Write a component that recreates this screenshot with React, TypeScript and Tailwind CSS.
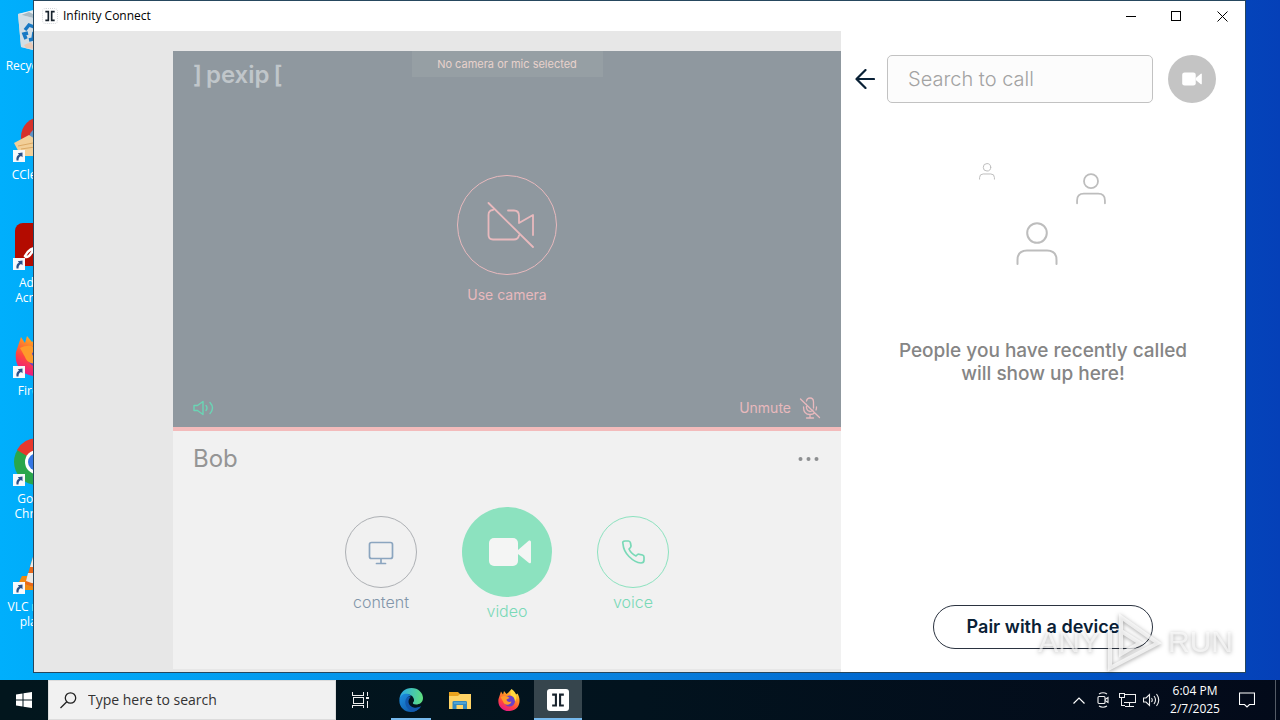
import type { ReactNode } from 'react';

function ShortcutArrow() {
  return (
    <svg viewBox="0 0 12 12" className="absolute bottom-0 left-0 size-3" aria-hidden="true">
      <rect width="12" height="12" fill="#f6f9fc" />
      <path d="M3.500 10.500C3 7.500 4 5.500 6 4.800L4.800 3.200 9.500 2.500 9.500 7.200 8 6C6 6.800 5.500 8.500 5.500 10.500Z" fill="#2c5188" />
    </svg>
  );
}

function RecycleBin() {
  return (
    <svg viewBox="0 0 48 48" className="size-12" aria-hidden="true">
      <path d="M5 9 24 5 43 9 38 42 24 46 8 42Z" fill="#c3d3dd" />
      <path d="M5 9 24 14 43 9 24 4Z" fill="#e6edf1" />
      <path d="M8 10 16 7 22 10 30 6 38 10 24 14Z" fill="#a9bac4" />
      <path d="M5 9 24 14 24 46 8 42Z" fill="#d3dee5" />
      <path d="M12 25 16 20 21 22M21 27 20 34 16 35M13 34 11 29 15 28" fill="none" stroke="#1879c4" strokeWidth="3.500" />
      <path d="M11 40 18 37 22 44 13 43Z" fill="#e9c9b6" />
    </svg>
  );
}

function CCleaner() {
  return (
    <svg viewBox="0 0 48 48" className="size-12" aria-hidden="true">
      <circle cx="28" cy="23" r="20" fill="#d6322b" />
      <circle cx="28" cy="25" r="12" fill="#5f93c6" />
      <path d="M1 29 16 21 25 27 25 42 8 42Z" fill="#f2cf98" />
      <path d="M5 32 20 29M8 35 22 33" stroke="#dba965" />
    </svg>
  );
}

function Acrobat() {
  return (
    <svg viewBox="0 0 48 48" className="size-12" aria-hidden="true">
      <rect x="2" y="1" width="44" height="43" rx="8" fill="#b30b00" />
      <path d="M12 34C16 26 23 24 33 26 42 28 37 34 29 27 20 20 21 9 24 12 27 16 18 36 13 35Z" fill="none" stroke="#fff" strokeWidth="2.500" />
    </svg>
  );
}

function Firefox({ className }: { className: string }) {
  return (
    <svg viewBox="0 0 48 48" className={className} aria-hidden="true">
      <defs>
        <linearGradient id="fox" x1="0.8" y1="0" x2="0.3" y2="1">
          <stop offset="0" stopColor="#fff04a" />
          <stop offset="0.350" stopColor="#ff9a24" />
          <stop offset="0.700" stopColor="#ff4440" />
          <stop offset="1" stopColor="#e8178a" />
        </linearGradient>
      </defs>
      <path d="M29 2C35 6 37 10 38 13L41 11C49 24 46 44 26 46 9 47 1 35 3 22L6 13 8 7 12 13 14 6 19 12C22 10 25 7 29 2Z" fill="url(#fox)" />
      <circle cx="25" cy="26" r="11" fill="#6a40c8" />
      <path d="M7 18C15 14 22 16 25 20L19 23C19 27 24 29 29 27 27 35 15 36 12 27Z" fill="#ff9a2a" />
      <path d="M28 4C38 9 42 19 36 27 36 20 32 16 27 14Z" fill="#ffd83d" />
    </svg>
  );
}

function Chrome() {
  return (
    <svg viewBox="0 0 48 48" className="size-12" aria-hidden="true">
      <circle cx="24" cy="24" r="23" fill="#29a64b" />
      <path d="M24 24 4 12A23 23 0 0 1 44 12Z" fill="#e8382c" />
      <path d="M24 24 44 12A23 23 0 0 1 24 47Z" fill="#fbc116" />
      <circle cx="24" cy="24" r="12" fill="#fff" />
      <circle cx="24" cy="24" r="9" fill="#3577e5" />
    </svg>
  );
}

function Vlc() {
  return (
    <svg viewBox="0 0 48 48" className="size-12" aria-hidden="true">
      <path d="M9 30H39L46 44H2Z" fill="#f08a12" />
      <path d="M22 4H26L36 38Q24 44 12 38Z" fill="#e9691a" />
      <path d="M20 11H28L31 21H17ZM15 27H33L35 35Q24 40 13 35Z" fill="#ece9e5" />
    </svg>
  );
}

const shortcuts: { lines: string[]; icon: ReactNode; place: string; linked: boolean }[] = [
  { lines: ['Recycle Bin'], icon: <RecycleBin />, place: 'top-[5px]', linked: false },
  { lines: ['CCleaner'], icon: <CCleaner />, place: 'top-[114px]', linked: true },
  { lines: ['Adobe', 'Acrobat'], icon: <Acrobat />, place: 'top-[222px]', linked: true },
  { lines: ['Firefox'], icon: <Firefox className="size-12" />, place: 'top-[330px]', linked: true },
  { lines: ['Google', 'Chrome'], icon: <Chrome />, place: 'top-[438px]', linked: true },
  { lines: ['VLC media', 'player'], icon: <Vlc />, place: 'top-[546px]', linked: true },
];

function CameraSolid({ className }: { className: string }) {
  return (
    <svg viewBox="0 0 42 30" className={className} fill="currentColor" aria-hidden="true">
      <rect x="0" y="1" width="29" height="28" rx="5" />
      <path d="M29 13 40 3.500Q42 3 42 5V25Q42 27 40 26L29 17Z" />
    </svg>
  );
}

function Person({ className, weight }: { className: string; weight: number }) {
  return (
    <svg viewBox="0 0 42 44" className={className} fill="none" stroke="#bdbdbd" strokeWidth={weight} strokeLinecap="round" aria-hidden="true">
      <circle cx="21" cy="11" r="9.800" />
      <path d="M1.500 42V38Q1.500 28.500 11 28.500H31Q40.500 28.500 40.500 38V42" />
    </svg>
  );
}

function PexipMark({ className }: { className: string }) {
  return (
    <svg viewBox="0 0 24 24" className={className} fill="none" stroke="#17222c" strokeWidth="2.500" aria-hidden="true">
      <path d="M5 5.500H9.500V18.500H5M19 5.500H14.500V18.500H19" />
    </svg>
  );
}

function TitleBar() {
  return (
    <header className="flex h-[30px] shrink-0 items-center bg-white text-black">
      <span className="ml-2 flex size-4 items-center justify-center rounded-sm border border-dotted border-[#d3d6da]">
        <PexipMark className="size-4 shrink-0" />
      </span>
      <h1 className="ml-[5px] flex-1 text-xs">Infinity Connect</h1>
      <button aria-label="Minimize" className="flex h-full w-[46px] items-center justify-center">
        <svg viewBox="0 0 11 11" className="size-[11px]" stroke="#000" shapeRendering="crispEdges"><path d="M0 5.500H10" /></svg>
      </button>
      <button aria-label="Maximize" className="flex h-full w-[45px] items-center justify-center">
        <svg viewBox="0 0 11 11" className="size-[11px]" fill="none" stroke="#000" shapeRendering="crispEdges"><rect x="0.500" y="0.500" width="9" height="9" /></svg>
      </button>
      <button aria-label="Close" className="flex h-full w-[46px] items-center justify-center">
        <svg viewBox="0 0 11 11" className="size-[11px]" stroke="#000"><path d="M0.500 0.500 10.500 10.500M10.500 0.500 0.500 10.500" /></svg>
      </button>
    </header>
  );
}

function VideoPreview() {
  return (
    <section aria-label="Camera preview" className="flex h-[380px] shrink-0 flex-col border-b-4 border-[#f3bbbb] bg-[#8f989f]">
      <div className="grid grid-cols-[1fr_auto_1fr] items-start">
        <p className="flex gap-1 pt-2 pl-5 text-2xl leading-8 font-semibold text-[#c0c6ca]">
          <span>]</span><span>pexip</span><span>[</span>
        </p>
        <p className="w-[191px] bg-[#969fa4] text-center text-[11px] leading-[26px] text-[#e8d2cc]">No camera or mic selected</p>
      </div>
      <div className="flex flex-1 items-center justify-center pb-2">
        <button className="flex flex-col items-center gap-2.5 text-sm text-[#e8b9bd]">
          <span className="flex size-[100px] items-center justify-center rounded-full border border-[#e8b9bd] pl-2">
            <svg viewBox="0 0 48 48" className="size-12" fill="none" stroke="currentColor" strokeWidth="1.800" strokeLinecap="round" strokeLinejoin="round" aria-hidden="true">
              <path d="M1.500 2 46 46M6 9Q1.500 9 1.500 14V34Q1.500 38.500 6 38.500H27Q31 38.500 32 34.500M21 9.500H27Q32 9.500 32 15V22L46 14V34" />
            </svg>
          </span>
          Use camera
        </button>
      </div>
      <div className="flex items-center justify-between px-5 pb-2">
        <button aria-label="Speaker" className="text-[#6ad5b5]">
          <svg viewBox="0 0 21 16" className="h-4 w-[21px]" fill="none" stroke="currentColor" strokeWidth="1.400" strokeLinejoin="round" strokeLinecap="round">
            <path d="M1 5.500H4.500L10 1.500V14.500L4.500 10.500H1ZM13 5.500Q15 8 13 10.500M17 2.500Q22 8 17 13.500" />
          </svg>
        </button>
        <button className="flex items-center gap-2 text-sm text-[#e8b9bd]">
          Unmute
          <svg viewBox="0 0 22 22" className="size-[22px]" fill="none" stroke="currentColor" strokeWidth="1.300" strokeLinecap="round" aria-hidden="true">
            <path d="M1.500 2 20.500 20.500M7.500 7.500V11Q8 14 11 14.500 13 14.500 14 13M7.500 4Q8 1 11 1 14.500 1 14.500 5V11M4.500 10Q4.500 17.500 11 17.500 14 17.500 15.500 16M17.500 10Q17.500 12 17 13M11 17.500V21M7.500 21H14.500" />
          </svg>
        </button>
      </div>
    </section>
  );
}

function CallPanel() {
  return (
    <section aria-label="Start a call" className="mb-[3px] flex flex-1 flex-col bg-[#f1f1f1]">
      <div className="flex items-center justify-between px-5 pt-3">
        <h2 className="text-2xl leading-8 text-[#959595]">Bob</h2>
        <button aria-label="More options" className="text-[#8d8f91]">
          <svg viewBox="0 0 24 6" className="h-1.5 w-6" fill="currentColor"><circle cx="3.500" cy="3" r="2" /><circle cx="11.500" cy="3" r="2" /><circle cx="19.500" cy="3" r="2" /></svg>
        </button>
      </div>
      <div className="mt-8 flex items-center justify-center gap-[45px] text-base leading-7 font-light">
        <button className="flex w-[72px] flex-col items-center text-[#8296aa]">
          <span className="flex size-[72px] items-center justify-center rounded-full border border-[#adb0b4]">
            <svg viewBox="0 0 26 26" className="size-[26px]" fill="none" stroke="#8ba5bf" strokeWidth="1.700" strokeLinecap="round" aria-hidden="true">
              <rect x="1.500" y="3.500" width="23" height="16" rx="2" /><path d="M13 20V24M8.500 24.500H17.500" />
            </svg>
          </span>
          content
        </button>
        <button className="flex flex-col items-center text-[#79d9b7]">
          <span className="flex size-[90px] items-center justify-center rounded-full bg-[#8ce2bf] pl-1.5 text-[#f4f5f4]">
            <CameraSolid className="h-[30px] w-[42px]" />
          </span>
          video
        </button>
        <button className="flex w-[72px] flex-col items-center text-[#79d9b7]">
          <span className="flex size-[72px] items-center justify-center rounded-full border border-[#8ce2bf]">
            <svg viewBox="0 0 24 24" className="size-6" fill="none" stroke="currentColor" strokeWidth="1.700" strokeLinejoin="round" aria-hidden="true">
              <path d="M2 4Q1 1 4 1H7.500Q9 1 9.500 3L10 6Q10 7 9 8L8 9Q10 13.500 15 16L16.500 14.500Q17.500 14 18.500 14.300L21.500 15Q23 15.500 23 17V20Q23 23 20 23 14 22.500 8 16.500 2.500 11 2 4Z" />
            </svg>
          </span>
          voice
        </button>
      </div>
    </section>
  );
}

function CallSidebar() {
  return (
    <aside className="flex w-[404px] shrink-0 flex-col items-center bg-white pt-6 pb-[23px]">
      <div className="flex w-full items-center pr-[29px] pl-3.5">
        <button aria-label="Back" className="mr-3 text-[#0a2136]">
          <svg viewBox="0 0 20 20" className="size-5" fill="none" stroke="currentColor" strokeWidth="2.200" strokeLinecap="round" strokeLinejoin="round"><path d="M10.500 1 1.500 10 10.500 19M2 10H19" /></svg>
        </button>
        <input aria-label="Search to call" placeholder="Search to call" className="h-12 w-0 flex-1 rounded-[5px] border border-[#c2c2c2] bg-[#fcfcfc] px-5 text-xl font-light placeholder:text-[#a3a3a3]" />
        <button aria-label="Start video call" className="ml-[15px] flex size-12 items-center justify-center rounded-full bg-[#c4c4c4] text-white">
          <CameraSolid className="h-[14px] w-5" />
        </button>
      </div>
      <div className="relative mt-[59px] h-[107px] w-32">
        <Person className="absolute top-0 left-0 h-[19px] w-4" weight={2.6} />
        <Person className="absolute top-[11px] left-[97px] h-[32px] w-[30px]" weight={2.5} />
        <Person className="absolute top-[60px] left-[37px] h-[44px] w-[42px]" weight={2} />
      </div>
      <p className="mt-[70px] w-[300px] text-center text-[19px] leading-[23px] font-medium text-[#858585]">
        People you have recently called will show up here!
      </p>
      <button className="mt-auto h-11 w-[220px] rounded-full border border-[#2b3340] text-lg font-semibold text-[#0a2136]">Pair with a device</button>
    </aside>
  );
}

function Watermark() {
  return (
    <div className="pointer-events-none absolute right-3 bottom-0 flex items-center gap-1.5 font-['Liberation_Sans',sans-serif] text-[30px] leading-[60px] text-white/60 drop-shadow-[0_1px_2px_rgba(0,0,0,0.5)]">
      <span>ANY</span>
      <svg viewBox="0 0 56 60" className="h-[60px] w-14" fill="none" stroke="#fff" strokeOpacity="0.700" strokeWidth="4" aria-hidden="true">
        <path d="M4 18V56L52 31 15 5V42L34 31 15 19" />
      </svg>
      <span>RUN</span>
    </div>
  );
}

function Taskbar() {
  return (
    <footer className="flex h-10 shrink-0 bg-linear-to-r from-[#02161d] via-[#02131e] to-[#030a1a] text-white">
      <button aria-label="Start" className="flex w-12 items-center justify-center">
        <svg viewBox="0 0 16 16" className="size-4" fill="#fff"><path d="M0 2.500 6.500 1.500V7.500H0ZM7.500 1.300 16 0V7.500H7.500ZM0 8.500H6.500V14.500L0 13.500ZM7.500 8.500H16V16L7.500 14.700Z" /></svg>
      </button>
      <label className="flex w-72 items-center border border-[#dcdcdc] bg-[#f1f1f1] pl-[11px]">
        <svg viewBox="0 0 17 17" className="size-[17px] shrink-0" fill="none" stroke="#222" strokeWidth="1.300" aria-hidden="true"><circle cx="10.500" cy="6" r="5.200" /><path d="M6.800 9.700 0.500 16" /></svg>
        <input aria-label="Type here to search" placeholder="Type here to search" className="ml-[11px] w-0 flex-1 bg-transparent text-sm text-black placeholder:text-[#333]" />
      </label>
      <nav aria-label="Taskbar apps" className="flex gap-px">
        <button aria-label="Task View" className="mr-0.5 flex w-12 items-center justify-center">
          <svg viewBox="0 0 17 16" className="h-4 w-[17px]" fill="none" stroke="#eee" shapeRendering="crispEdges">
            <path d="M0.500 0V3.500H11.500V0M0.500 16V13.500H11.500V16M1.500 5.500H11.500V11.500H1.500ZM15.500 0V4M15.500 9V16" /><path d="M14 5.500H17M14 6.500H17" />
          </svg>
        </button>
        <button aria-label="Microsoft Edge" className="flex w-12 flex-col items-center">
          <svg viewBox="0 0 48 48" className="mt-2 size-6" aria-hidden="true">
            <defs>
              <linearGradient id="edgeTop" x1="0" y1="0.500" x2="1" y2="0.600"><stop offset="0" stopColor="#2aa9e8" /><stop offset="1" stopColor="#5fe07d" /></linearGradient>
              <linearGradient id="edgeLow" x1="0" y1="0" x2="1" y2="1"><stop offset="0" stopColor="#1d8fe0" /><stop offset="1" stopColor="#0c4f9f" /></linearGradient>
            </defs>
            <path d="M1 22C2 9 12 0 25 0 39 0 48 10 48 20 48 29 41 33 34 33 29 33 27 31 28 29 30 27 31 24 29 20 24 9 5 11 1 22Z" fill="url(#edgeTop)" />
            <path d="M1 22C3 12 16 8 24 15 16 16 14 24 16 30 19 39 30 44 44 36 39 44 32 48 24 48 10 48-1 37 1 22Z" fill="url(#edgeLow)" />
            <path d="M18 17C9 23 11 41 26 47 33 48 40 43 44 37 34 43 20 38 19 28 19 23 21 20 24 17Z" fill="#1258ad" />
          </svg>
          <span className="mt-auto h-0.5 w-10 bg-[#76b9ed]" />
        </button>
        <button aria-label="File Explorer" className="flex w-12 items-center justify-center">
          <svg viewBox="0 0 22 18" className="h-[18px] w-[22px]" aria-hidden="true">
            <path d="M0 1H9L11 3H21V7H0Z" fill="#eaa31e" /><path d="M0 5 9 5 11 3H22V18H0Z" fill="#ffd466" />
            <path d="M3.500 18V11Q3.500 10 5 10H16.500Q18 10 18 11V18H14V14H7.500V18Z" fill="#348ac0" /><path d="M5 12H17" stroke="#6bbbe5" />
          </svg>
        </button>
        <button aria-label="Firefox" className="flex w-12 items-center justify-center"><Firefox className="size-6" /></button>
        <button aria-label="Infinity Connect" className="flex w-12 flex-col items-center bg-[#36454d]">
          <span className="mt-[9px] flex size-[22px] items-center justify-center rounded-[3px] bg-white"><PexipMark className="size-5" /></span>
          <span className="mt-auto h-0.5 w-full bg-[#76b9ed]" />
        </button>
      </nav>
      <div className="ml-auto flex items-stretch">
        <button aria-label="Show hidden icons" className="flex w-6 items-center justify-center">
          <svg viewBox="0 0 12 7" className="h-[7px] w-3" fill="none" stroke="#fff" strokeWidth="1.200"><path d="M0.500 6.500 6 1 11.500 6.500" /></svg>
        </button>
        <button aria-label="Meet Now" className="flex w-6 items-center justify-center">
          <svg viewBox="0 0 12 16" className="h-4 w-3" fill="none" stroke="#eee" strokeWidth="1.100"><rect x="1" y="4.500" width="7" height="7" rx="1" /><path d="M8 7.500 11 5.500V10.500L8 8.500M2 2Q6-0.500 10 2M2 14Q6 16.500 10 14" /></svg>
        </button>
        <button aria-label="Network" className="flex w-6 items-center justify-center">
          <svg viewBox="0 0 17 14" className="h-3.5 w-[17px]" fill="none" stroke="#eee" shapeRendering="crispEdges"><path d="M6 1.500H16.500V9.500H4.500M10.500 10V13M6 13.500H15M0.500 0.500H5.500V4.500H0.500ZM2.500 5V12.500H6" /></svg>
        </button>
        <button aria-label="Volume" className="flex w-6 items-center justify-center">
          <svg viewBox="0 0 17 14" className="h-3.5 w-[17px]" fill="none" stroke="#eee" strokeWidth="1.100"><path d="M0.500 5H3L6.500 1.500V12.500L3 9H0.500ZM8.500 5Q10 7 8.500 9M11 3Q14 7 11 11M13.500 1Q18 7 13.500 13" /></svg>
        </button>
        <button className="w-16 text-center text-xs leading-[18px]">
          <span className="block">6:04 PM</span>
          <span className="block">2/7/2025</span>
        </button>
        <button aria-label="Notifications" className="flex w-10 items-center justify-center">
          <svg viewBox="0 0 16 16" className="size-4" fill="none" stroke="#fff" strokeWidth="1.100"><path d="M0.500 1H15.500V12.500H10.500L8 15 5.500 12.500H0.500Z" /></svg>
        </button>
        <button aria-label="Show desktop" className="ml-2 w-[5px] border-l border-[#555b66]" />
      </div>
    </footer>
  );
}

export default function App() {
  return (
    <div className="flex min-h-screen flex-col font-['Open_Sans',sans-serif]">
      <main className="relative flex flex-1 flex-col bg-linear-to-r from-[#00affc] via-[#087fdd] to-[#0540b8] pr-[34px] pb-[7px] pl-[33px]">
        <ul className="absolute inset-y-0 left-0 w-[74px] overflow-hidden text-center text-xs leading-[15px] text-white">
          {shortcuts.map(({ lines, icon, place, linked }) => (
            <li key={lines[0]} className={`absolute inset-x-0 flex flex-col items-center ${place}`}>
              <span className="relative">
                {icon}
                {linked && <ShortcutArrow />}
              </span>
              <span className="mt-[5px]">
                {lines.map((line) => <span key={line} className="block">{line}</span>)}
              </span>
            </li>
          ))}
        </ul>
        <article className="relative flex flex-1 flex-col border border-[#26475e] bg-white">
          <TitleBar />
          <div className="flex flex-1 font-['Inter',sans-serif]">
            <div className="flex flex-1 flex-col bg-[#e7e7e7] pt-5 pl-[139px]">
              <VideoPreview />
              <CallPanel />
            </div>
            <CallSidebar />
          </div>
          <Watermark />
        </article>
      </main>
      <Taskbar />
    </div>
  );
}
